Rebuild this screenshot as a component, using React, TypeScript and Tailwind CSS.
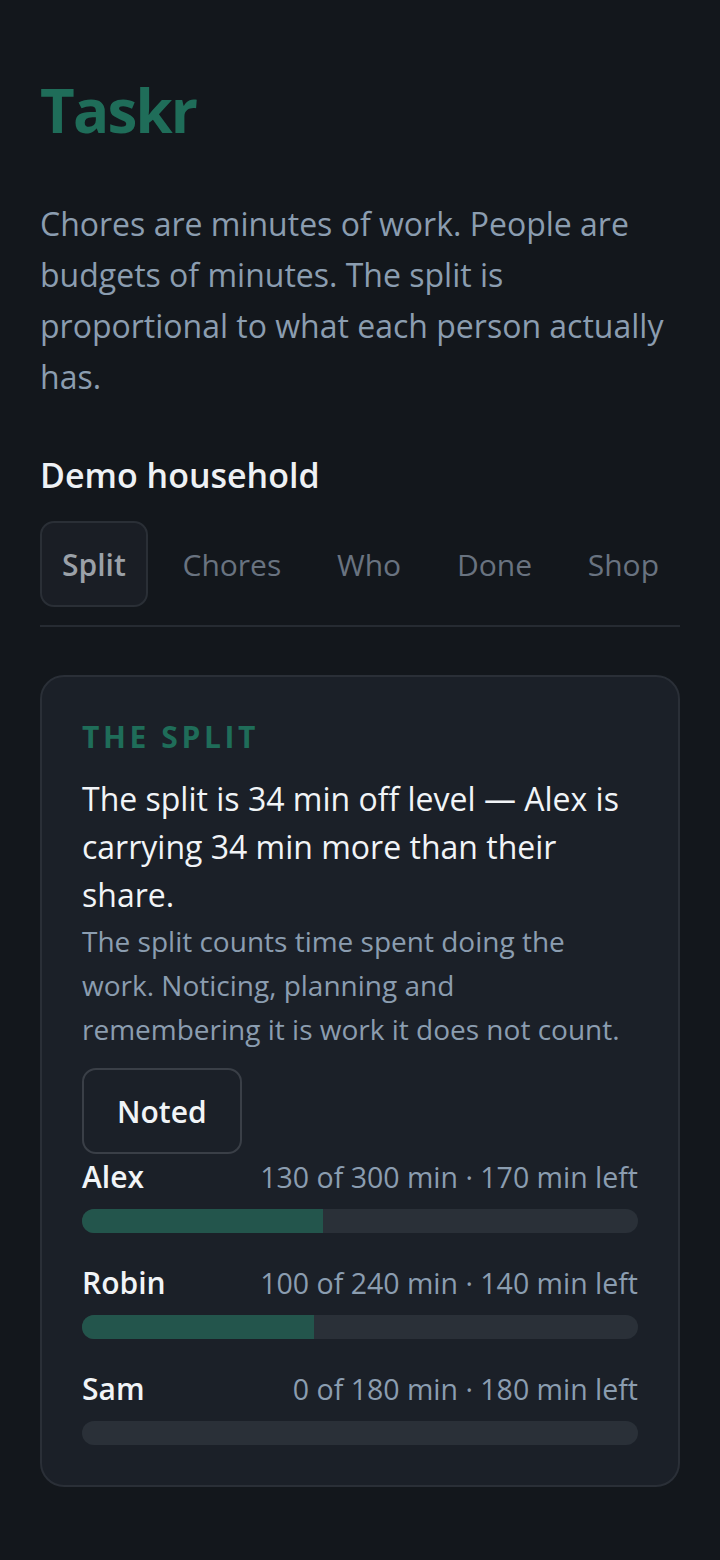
import React from 'react';

const people = [
  { name: 'Alex', done: 130, budget: 300 },
  { name: 'Robin', done: 100, budget: 240 },
  { name: 'Sam', done: 0, budget: 180 },
];

const tabs = ['Split', 'Chores', 'Who', 'Done', 'Shop'];

export default function App() {
  return (
    <div className="min-h-[1560px] w-full bg-[#13171c] px-10 pt-[74px] pb-16 font-['Open_Sans',sans-serif]">
      <h1 className="text-[60px] font-bold leading-[72px] tracking-[-0.03em] text-[#1f6d59]">Taskr</h1>

      <p className="mt-[52px] text-[32px] leading-[51px] text-[#8b9db0]">
        Chores are minutes of work. People are budgets of minutes. The split is proportional to what each person actually has.
      </p>

      <h2 className="mt-[51px] text-[34px] font-semibold leading-[44px] text-[#eef1f4]">Demo household</h2>

      {/* tabs */}
      <div className="mt-6 flex items-center justify-between border-b-2 border-[#262b32] pb-[18px]">
        {tabs.map((t, i) => (
          <button
            key={t}
            className={
              i === 0
                ? 'h-[86px] rounded-[14px] border-2 border-[#2a2f36] bg-[#1a1e25] px-[20px] text-[30px] font-semibold text-[#9ba1a8]'
                : 'h-[86px] border-2 border-transparent px-[19px] text-[30px] text-[#697380]'
            }
          >
            {t}
          </button>
        ))}
      </div>

      {/* card */}
      <div className="mt-[48px] rounded-[24px] border-2 border-[#2a2f37] bg-[#1b2028] px-[40px] pt-[40px] pb-[40px]">
        <div className="text-[30px] font-bold uppercase leading-[40px] tracking-[0.12em] text-[#1f6d59]">The split</div>
        <p className="mt-[18px] text-[32px] leading-[48px] text-[#f1f4f7]">
          The split is 34 min off level — Alex is carrying 34 min more than their share.
        </p>
        <p className="text-[28px] leading-[44px] text-[#8b9db0]">
          The split counts time spent doing the work. Noticing, planning and remembering it is work it does not count.
        </p>
        <button className="mt-[17px] h-[86px] rounded-[14px] border-2 border-[#3a3f47] px-[33px] text-[30px] font-semibold text-[#f1f4f7]">
          Noted
        </button>

        <div className="mt-[3px] flex flex-col gap-[30px]">
          {people.map((p) => (
            <div key={p.name}>
              <div className="flex items-baseline justify-between leading-[40px]">
                <span className="text-[30px] font-semibold text-[#f1f4f7]">{p.name}</span>
                <span className="text-[28.5px] text-[#8b9db0]">
                  {p.done} of {p.budget} min · {p.budget - p.done} min left
                </span>
              </div>
              <div className="mt-3 h-6 w-full overflow-hidden rounded-full bg-[#2a3038]">
                <div className="h-full bg-[#23554c]" style={{ width: `${(p.done / p.budget) * 100}%` }} />
              </div>
            </div>
          ))}
        </div>
      </div>
    </div>
  );
}
